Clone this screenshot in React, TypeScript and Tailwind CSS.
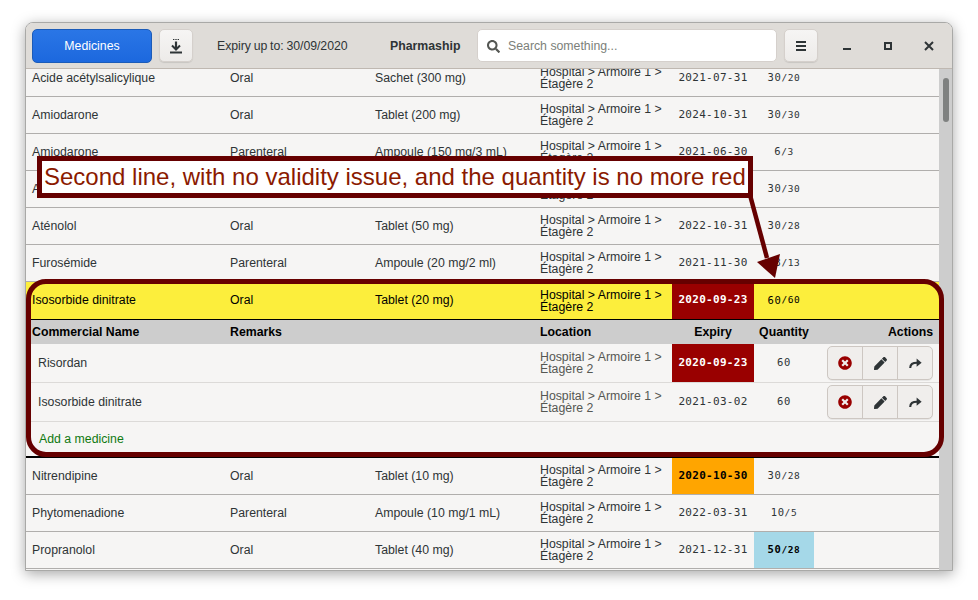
import { FaTimesCircle, FaPen, FaSearch } from 'react-icons/fa';

type Med = {
    name: string;
    route: string;
    form: string;
    expiry: string;
    have: string;
    want: string;
    expiryClass?: string;
    qtyClass?: string;
};

const before: Med[] = [
    { name: 'Acide acétylsalicylique', route: 'Oral', form: 'Sachet (300 mg)', expiry: '2021-07-31', have: '30', want: '20' },
    { name: 'Amiodarone', route: 'Oral', form: 'Tablet (200 mg)', expiry: '2024-10-31', have: '30', want: '30' },
    { name: 'Amiodarone', route: 'Parenteral', form: 'Ampoule (150 mg/3 mL)', expiry: '2021-06-30', have: '6', want: '3' },
    { name: 'Aténolol', route: 'Oral', form: 'Tablet (100 mg)', expiry: '2022-10-31', have: '30', want: '30' },
    { name: 'Aténolol', route: 'Oral', form: 'Tablet (50 mg)', expiry: '2022-10-31', have: '30', want: '28' },
    { name: 'Furosémide', route: 'Parenteral', form: 'Ampoule (20 mg/2 ml)', expiry: '2021-11-30', have: '13', want: '13' },
];

const after: Med[] = [
    { name: 'Nitrendipine', route: 'Oral', form: 'Tablet (10 mg)', expiry: '2020-10-30', have: '30', want: '28', expiryClass: 'bg-[#ffa500] text-black font-bold' },
    { name: 'Phytomenadione', route: 'Parenteral', form: 'Ampoule (10 mg/1 mL)', expiry: '2022-03-31', have: '10', want: '5' },
    { name: 'Propranolol', route: 'Oral', form: 'Tablet (40 mg)', expiry: '2021-12-31', have: '50', want: '28', qtyClass: 'bg-[#a5d8e8] text-black font-bold' },
];

const mono = "font-['DejaVu_Sans_Mono',monospace]";

const Location = () => (
    <div className="w-[132px] leading-[12px]">Hospital &gt; Armoire 1 &gt; Étagère 2</div>
);

const Row = ({ med }: { med: Med }) => (
    <div className="flex h-[37px] items-stretch border-b border-[#b0aeac] text-[#2e3436]">
        <div className="w-[204px] pl-[6px] self-center">{med.name}</div>
        <div className="w-[145px] self-center">{med.route}</div>
        <div className="w-[165px] self-center whitespace-nowrap">{med.form}</div>
        <div className="w-[132px] self-center"><Location /></div>
        <div className={`w-[82px] flex items-center justify-center text-[11px] tracking-[0.3px] ${mono} ${med.expiryClass ?? ''}`}>{med.expiry}</div>
        <div className={`w-[60px] flex items-center justify-center text-[10.5px] tracking-[0.6px] ${mono} ${med.qtyClass ?? ''}`}>
            {med.have}<span className="text-[9.5px]">/{med.want}</span>
        </div>
    </div>
);

const Actions = () => (
    <div className="flex h-[34px] w-[106px] rounded-[5px] border border-[#cdc7c2] bg-[#f0eeec] shadow-[0_1px_0_rgba(0,0,0,0.06)]">
        <div className="flex flex-1 items-center justify-center border-r border-[#cdc7c2]"><FaTimesCircle size={14} className="text-[#990000]" /></div>
        <div className="flex flex-1 items-center justify-center border-r border-[#cdc7c2]"><FaPen size={13} className="text-[#2e3436]" /></div>
        <div className="flex flex-1 items-center justify-center text-[#2e3436]">
            <svg width="13" height="11" viewBox="0 0 13 11" fill="none">
                <path d="M1.2 10C1.2 6.2 3.6 4.7 8 4.7" stroke="currentColor" strokeWidth="2.1" />
                <path d="M7.6 .6l5 4.1-5 4.1z" fill="currentColor" />
            </svg>
        </div>
    </div>
);

const SubRow = ({ name, expiry, expired }: { name: string; expiry: string; expired?: boolean }) => (
    <div className="flex h-[39px] items-stretch border-b border-[#dcdad8] text-[#2e3436]">
        <div className="w-[514px] pl-[12px] self-center">{name}</div>
        <div className="w-[132px] self-center text-[#555753]"><Location /></div>
        <div className={`w-[82px] flex items-center justify-center text-[11px] tracking-[0.3px] ${mono} ${expired ? 'bg-[#990000] text-white font-bold' : ''}`}>{expiry}</div>
        <div className={`w-[60px] flex items-center justify-center text-[10.5px] tracking-[0.6px] ${mono}`}>60</div>
        <div className="flex flex-1 items-center justify-end pr-[6px]"><Actions /></div>
    </div>
);

const ToolButton = ({ children }: { children: React.ReactNode }) => (
    <div className="flex h-[33px] w-[34px] items-center justify-center rounded-[5px] border border-[#d5d0cc] bg-gradient-to-b from-[#f6f5f4] to-[#edebe9] text-[#2e3436] shadow-[0_1px_1px_rgba(0,0,0,0.1)]">
        {children}
    </div>
);

export default function App() {
    return (
        <div className="h-[600px] w-[978px] overflow-hidden bg-white pl-[25px] pt-[22px] font-['Liberation_Sans',sans-serif] text-[12.3px]">
            <div className="relative flex h-[549px] w-[928px] flex-col overflow-hidden rounded-t-[8px] border border-[#a9a9a7] bg-[#f6f5f4] shadow-[0_3px_14px_rgba(0,0,0,0.35)]">
                {/* Header bar */}
                <div className="flex h-[46px] shrink-0 items-center border-b border-[#bfb8b1] bg-[#dfdcd8] pl-[6px]">
                    <div className="flex h-[34px] w-[120px] items-center justify-center rounded-[5px] border border-[#1b5bb8] bg-gradient-to-b from-[#2a76e6] to-[#1c68de] pt-px text-white">Medicines</div>
                    <div className="ml-[7px]">
                        <ToolButton>
                            <svg width="14" height="16" viewBox="0 0 14 16" fill="none" stroke="currentColor">
                                <path d="M4 1.5h1.4M6.3 1.5h1.4M8.6 1.5h1.4" strokeWidth="1.2" />
                                <path d="M7 3.5v7" strokeWidth="2.2" />
                                <path d="M3 7.5l4 4 4-4" strokeWidth="2" />
                                <path d="M1 14.5h12" strokeWidth="1.8" />
                            </svg>
                        </ToolButton>
                    </div>
                    <div className="ml-[24px] w-[173px] whitespace-nowrap pt-px tracking-[-0.04px] text-[#2e3436] [word-spacing:-0.6px]">Expiry up to: 30/09/2020</div>
                    <div className="w-[87px] whitespace-nowrap pt-px font-bold text-[#2e3436]">Pharmaship</div>
                    <div className="flex h-[33px] w-[300px] items-center rounded-[5px] border border-[#d5d0cc] bg-white pl-[9px] pt-px text-[#7c7f7a]">
                        <FaSearch size={13} className="mr-[8px] text-[#555753]" />
                        Search something...
                    </div>
                    <div className="ml-[7px]">
                        <ToolButton>
                            <svg width="12" height="10" viewBox="0 0 12 10" stroke="currentColor" strokeWidth="1.8">
                                <path d="M1 1h10M1 5h10M1 9h10" />
                            </svg>
                        </ToolButton>
                    </div>
                    <div className="ml-[24px] flex w-[92px] items-center justify-between text-[#2e3436]">
                        <svg width="10" height="10" viewBox="0 0 10 10" stroke="currentColor" strokeWidth="2"><path d="M1 8h8" /></svg>
                        <svg width="10" height="10" viewBox="0 0 10 10" fill="none" stroke="currentColor" strokeWidth="2"><path d="M2 2h6v6H2z" /></svg>
                        <svg width="10" height="10" viewBox="0 0 10 10" stroke="currentColor" strokeWidth="2"><path d="M1 1l8 8M9 1l-8 8" /></svg>
                    </div>
                </div>

                {/* List and scrollbar */}
                <div className="flex min-h-0 flex-1">
                    <div className="min-w-0 flex-1 overflow-hidden">
                        <div className="-mt-[9px]">
                            {before.map((med, i) => <Row key={i} med={med} />)}

                            {/* Opened line */}
                            <div className="flex h-[38px] items-stretch border-b border-black bg-[#fcee3c] text-black">
                                <div className="w-[204px] pl-[6px] self-center">Isosorbide dinitrate</div>
                                <div className="w-[145px] self-center">Oral</div>
                                <div className="w-[165px] self-center">Tablet (20 mg)</div>
                                <div className="w-[132px] self-center"><Location /></div>
                                <div className={`w-[82px] flex items-center justify-center bg-[#990000] text-[11px] font-bold tracking-[0.3px] text-white ${mono}`}>2020-09-23</div>
                                <div className={`w-[60px] flex items-center justify-center text-[10.5px] tracking-[0.6px] ${mono}`}>60<span className="text-[9.5px]">/60</span></div>
                            </div>
                            <div className="flex h-[24px] items-center bg-[#cdcdcd] font-bold text-black">
                                <div className="w-[204px] pl-[6px]">Commercial Name</div>
                                <div className="w-[310px]">Remarks</div>
                                <div className="w-[132px]">Location</div>
                                <div className="w-[82px] text-center">Expiry</div>
                                <div className="w-[60px] text-center">Quantity</div>
                                <div className="flex-1 pr-[6px] text-right">Actions</div>
                            </div>
                            <SubRow name="Risordan" expiry="2020-09-23" expired />
                            <SubRow name="Isosorbide dinitrate" expiry="2021-03-02" />
                            <div className="flex h-[36px] items-center border-b-2 border-black pl-[13px] text-[#107a10]">Add a medicine</div>

                            {after.map((med, i) => <Row key={i} med={med} />)}
                        </div>
                    </div>
                    <div className="w-[13px] shrink-0 bg-[#cdcdcd] pl-[4px] pt-[9px]">
                        <div className="h-[44px] w-[6px] rounded-full bg-[#7f8180]" />
                    </div>
                </div>

                {/* Annotation overlays */}
                <div className="absolute left-[11px] top-[133px] flex h-[42px] w-[716px] items-center border-[5px] border-[#660000] bg-white pl-[2px] text-[24px] whitespace-nowrap text-[#8b1a00]">
                    Second line, with no validity issue, and the quantity is no more red
                </div>
                <svg className="absolute left-[710px] top-[170px]" width="60" height="90" viewBox="0 0 60 90">
                    <path d="M14 2l17 63" stroke="#660000" strokeWidth="4.5" fill="none" />
                    <path d="M39 85L21 69l23-8z" fill="#660000" />
                </svg>
                <div className="absolute left-0 top-[256px] h-[178px] w-[918px] rounded-[20px] border-[5px] border-[#660000]" />
            </div>
        </div>
    );
}
